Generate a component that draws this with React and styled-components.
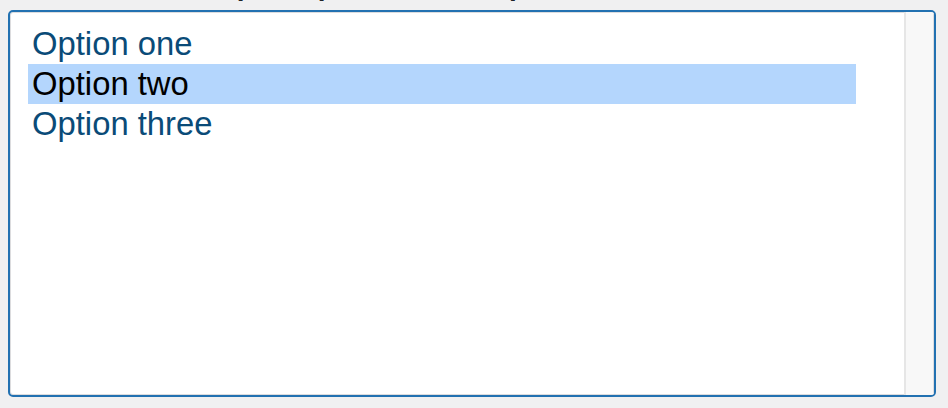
import styled, { createGlobalStyle } from "styled-components";

const GlobalStyle = createGlobalStyle`
  html, body {
    margin: 0;
    padding: 0;
    background: #f0f0f1;
    overflow: hidden;
  }
`;

const Page = styled.div`
  display: flex;
  flex-direction: column;
  gap: 10px;
  padding: 0 8px;
  height: 408px;
  box-sizing: border-box;
  font-family: "Liberation Sans", Arial, sans-serif;
`;

const Label = styled.label`
  display: block;
  margin-top: -28px;
  height: 28px;
  font-size: 28px;
  line-height: 28px;
  font-weight: 700;
  color: #1d2327;
  white-space: nowrap;
`;

const Select = styled.div`
  display: flex;
  width: 928px;
  height: 387px;
  box-sizing: border-box;
  background: #fff;
  border: 2px solid #2271b1;
  border-radius: 5px;
  box-shadow: inset 0 0 0 1px #dcdcde;
  overflow: hidden;
`;

const List = styled.ul`
  flex: 1;
  list-style: none;
  margin: 0;
  padding: 12px 48px 0 18px;
`;

const Option = styled.li`
  height: 40px;
  padding-left: 4px;
  font-size: 32.8px;
  line-height: 40px;
  color: ${(p) => (p.$selected ? "#000" : "#0a4b78")};
  background: ${(p) => (p.$selected ? "#b4d6fd" : "transparent")};
  cursor: default;
`;

const Scrollbar = styled.div`
  width: 28px;
  background: #f8f8f8;
  border-left: 2px solid #e6e6e6;
  box-shadow: inset -1px 0 0 #dcdcde;
`;

const options = [
  { label: "Option one" },
  { label: "Option two", selected: true },
  { label: "Option three" },
];

export default function App() {
  return (
    <>
      <GlobalStyle />
      <Page>
        <Label>Select the items, pick up to three samples</Label>
        <Select role="listbox" aria-multiselectable="true">
          <List>
            {options.map((o) => (
              <Option key={o.label} role="option" aria-selected={!!o.selected} $selected={o.selected}>
                {o.label}
              </Option>
            ))}
          </List>
          <Scrollbar />
        </Select>
      </Page>
    </>
  );
}
